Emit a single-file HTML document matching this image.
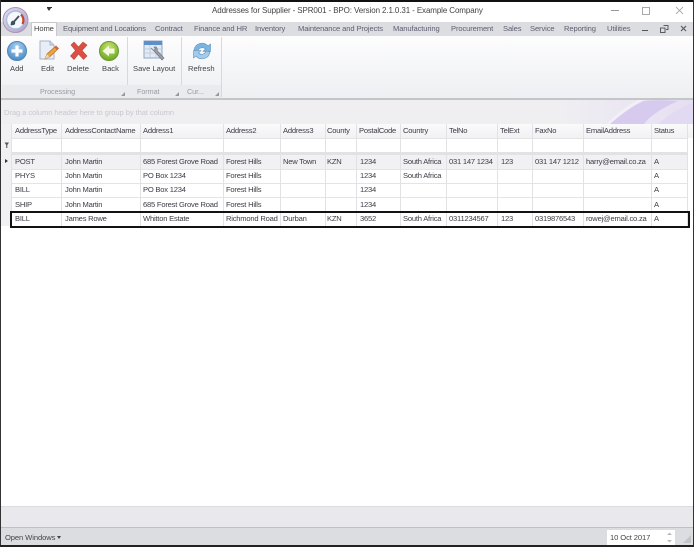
<!DOCTYPE html>
<html><head><meta charset="utf-8">
<style>
html,body{margin:0;padding:0;width:694px;height:547px;overflow:hidden;background:#fff}
#p{position:relative;width:694px;height:547px;overflow:hidden;font-family:"Liberation Sans",sans-serif;font-size:7.6px;letter-spacing:-.22px;color:#3c3c46;background:#fff;filter:blur(.3px)}
#p div{position:absolute}
.t{white-space:nowrap;line-height:12px;height:12px}
.tab{top:23px;color:#5d6070;white-space:nowrap;line-height:12px;font-size:7.6px;letter-spacing:-.12px}
.l{top:63px;white-space:nowrap;line-height:12px;color:#44444e;font-size:7.6px;letter-spacing:0}
.g{top:86px;white-space:nowrap;line-height:12px;color:#9a9aa2;font-size:7.2px;letter-spacing:-.05px}
.v{width:1px;top:124px;height:102px;background:#e2e2e5}
.h{left:11px;width:676px;height:1px;background:#e4e4e7}
</style></head><body><div id="p">
<!-- frame -->
<div style="left:0;top:0;width:694px;height:2px;background:#111"></div>
<div style="left:0;top:0;width:1px;height:547px;background:#333"></div>
<div style="left:693px;top:0;width:1px;height:547px;background:#333"></div>
<div style="left:0;top:545px;width:694px;height:2px;background:#222"></div>
<!-- title -->
<div class="t" style="left:212px;top:5px;font-size:8px;letter-spacing:-.11px;color:#444;width:300px">Addresses for Supplier - SPR001 - BPO: Version 2.1.0.31 - Example Company</div>
<div style="left:47px;top:8px;width:0;height:0;border-left:2.5px solid transparent;border-right:2.5px solid transparent;border-top:3.5px solid #333"></div>
<div style="left:47px;top:7px;width:5px;height:1px;background:#333"></div>
<div style="left:611px;top:10px;width:8px;height:1px;background:#999"></div>
<div style="left:642px;top:7px;width:6px;height:6px;border:1px solid #aaa"></div>
<svg style="position:absolute;left:675px;top:6px" width="9" height="9"><path d="M1 1L8 8M8 1L1 8" stroke="#999" stroke-width="0.8"/></svg>
<!-- tab strip -->
<div style="left:1px;top:22px;width:692px;height:14px;background:#dcdde1"></div>
<div style="left:31px;top:22px;width:26px;height:14px;background:#fdfdfe;border:1px solid #c8c8cc;border-bottom:none;box-sizing:border-box"></div>
<div class="tab" style="left:34px;color:#444">Home</div>
<div class="tab" style="left:63px">Equipment and Locations</div>
<div class="tab" style="left:155px">Contract</div>
<div class="tab" style="left:194px">Finance and HR</div>
<div class="tab" style="left:255px">Inventory</div>
<div class="tab" style="left:298px">Maintenance and Projects</div>
<div class="tab" style="left:393px">Manufacturing</div>
<div class="tab" style="left:451px">Procurement</div>
<div class="tab" style="left:503px">Sales</div>
<div class="tab" style="left:530px">Service</div>
<div class="tab" style="left:564px">Reporting</div>
<div class="tab" style="left:607px">Utilities</div>
<div style="left:642px;top:30px;width:6px;height:1px;background:#555"></div>
<svg style="position:absolute;left:660px;top:25px" width="9" height="9"><path d="M3.5 0.5H8V4.5H6M0.5 3H5V7.5H0.5Z" fill="none" stroke="#5a5a66"/></svg>
<svg style="position:absolute;left:680px;top:25px" width="8" height="8"><path d="M1 1L6 6M6 1L1 6" stroke="#5a5a66" stroke-width="1.2"/></svg>
<!-- ribbon -->
<div style="left:1px;top:36px;width:692px;height:62px;background:linear-gradient(#fdfdfe,#eeeff2)"></div>
<div style="left:1px;top:98px;width:692px;height:2px;background:#c4c5c9"></div>
<div style="left:127px;top:37px;width:1px;height:60px;background:#d8d9dd"></div>
<div style="left:181px;top:37px;width:1px;height:60px;background:#d8d9dd"></div>
<div style="left:221px;top:37px;width:1px;height:60px;background:#d8d9dd"></div>
<div style="left:2px;top:85px;width:219px;height:13px;background:#eaebee"></div>
<!-- ribbon icons -->
<svg style="position:absolute;left:6px;top:40px" width="22" height="22"><defs><radialGradient id="a" cx=".5" cy=".3" r=".8"><stop offset="0" stop-color="#a9d2f2"/><stop offset="1" stop-color="#3c7fc0"/></radialGradient><radialGradient id="b" cx=".5" cy=".3" r=".8"><stop offset="0" stop-color="#c6e36a"/><stop offset="1" stop-color="#5f9e1c"/></radialGradient></defs><circle cx="11" cy="11" r="9.5" fill="url(#a)" stroke="#4f86b8"/><path d="M11 5.5V16.5M5.5 11H16.5" stroke="#fff" stroke-width="3.2"/></svg>
<svg style="position:absolute;left:38px;top:39px" width="22" height="23"><path d="M2 2H12L16 6V20H2Z" fill="#e9eef6" stroke="#a8b4c6"/><path d="M12 2V6H16" fill="#cdd8e6" stroke="#a8b4c6"/><path d="M7 20L9 15L18 7L20.5 9.5L11.5 18Z" fill="#eda43c" stroke="#b06a20" stroke-width=".7"/><path d="M7 20L9 15L11.5 18Z" fill="#f3d6a8"/><path d="M18 7L20.5 9.5L19 11L16.5 8.5Z" fill="#d8604a"/></svg>
<svg style="position:absolute;left:68px;top:40px" width="21" height="21"><path d="M3 5L6 2L10.5 7L15 2L19 5L14 10.5L19 16L15.500 19.500L10.500 14L6 19.500L2.500 16L7.500 10.500Z" fill="#dd4f42" stroke="#c2493e" stroke-width=".6"/></svg>
<svg style="position:absolute;left:98px;top:40px" width="22" height="22"><circle cx="11" cy="11" r="9.500" fill="url(#b)" stroke="#6a9a2a"/><path d="M4.500 11L11 5.500V8.500H16.500V13.500H11V16.500Z" fill="#f4f8e0"/></svg>
<svg style="position:absolute;left:143px;top:40px" width="24" height="23"><rect x="1" y="1" width="18" height="17" fill="#e3eaf4" stroke="#8ea6c4"/><rect x="1" y="1" width="18" height="4" fill="#5f8fc8"/><path d="M1 9H19M1 13H19M7 5V18M13 5V18" stroke="#b7c6da" stroke-width=".8"/><path d="M8 8L12 12L19 20L21 18L14 10.500C15 8 13 6.500 11 7L12.500 9L10.500 10.500L8.500 8.500Z" fill="#9a9ea6" stroke="#6e727a" stroke-width=".6"/></svg>
<svg style="position:absolute;left:190px;top:40px" width="24" height="22"><path d="M4 10A8 8 0 0 1 18 6L20.500 4V11.500H13L15.500 9A4.500 4.500 0 0 0 8 11Z" fill="#7cb4e0" stroke="#5f92c0" stroke-width=".6"/><path d="M20 12A8 8 0 0 1 6 16L3.500 18V10.500H11L8.500 13A4.500 4.500 0 0 0 16 11Z" fill="#a4cbea" stroke="#5f92c0" stroke-width=".6"/></svg>
<div class="l" style="left:10px">Add</div>
<div class="l" style="left:41px">Edit</div>
<div class="l" style="left:67px">Delete</div>
<div class="l" style="left:102px">Back</div>
<div class="l" style="left:133px">Save Layout</div>
<div class="l" style="left:188px">Refresh</div>
<div class="g" style="left:40px">Processing</div>
<div class="g" style="left:137px">Format</div>
<div class="g" style="left:187px">Cur...</div>
<svg style="position:absolute;left:121px;top:92px" width="5" height="5"><path d="M4 0V4H0Z" fill="#999"/></svg>
<svg style="position:absolute;left:175px;top:92px" width="5" height="5"><path d="M4 0V4H0Z" fill="#999"/></svg>
<svg style="position:absolute;left:215px;top:92px" width="5" height="5"><path d="M4 0V4H0Z" fill="#999"/></svg>
<!-- group panel -->
<div style="left:1px;top:100px;width:692px;height:24px;background:#efeff2"></div>
<svg style="position:absolute;left:560px;top:100px" width="133" height="24"><defs><linearGradient id="c" x1="0" x2="1"><stop offset="0" stop-color="#efeff2"/><stop offset="1" stop-color="#e6def2"/></linearGradient></defs><rect width="133" height="24" fill="url(#c)"/><path d="M50 24C62 14 72 6 84 1C92 0 106 0 118 1C102 8 90 16 84 24Z" fill="#d6cbef"/><path d="M98 24C108 16 118 8 133 3V24Z" fill="#e2d9f2"/><path d="M47 24C58 12 70 4 78 0H84C72 6 60 14 50 24Z" fill="#f2eff7"/></svg>
<div class="t" style="left:4px;top:107px;color:#c8c8ce;font-size:7.6px;letter-spacing:-.08px">Drag a column header here to group by that column</div>
<!-- grid -->
<div style="left:1px;top:124px;width:692px;height:14px;background:linear-gradient(#fafafb,#f1f1f3)"></div>
<div style="left:1px;top:124px;width:10px;height:102px;background:#f1f1f3"></div>
<div style="left:11px;top:152px;width:676px;height:3px;background:#e2e2e5"></div>
<div style="left:11px;top:155px;width:676px;height:14px;background:#f1f1f3"></div>
<div class="h" style="top:138px"></div><div class="h" style="top:169px"></div><div class="h" style="top:183px"></div><div class="h" style="top:197px"></div>
<div class="v" style="left:11px"></div><div class="v" style="left:61px"></div><div class="v" style="left:140px"></div><div class="v" style="left:223px"></div><div class="v" style="left:280px"></div><div class="v" style="left:325px"></div><div class="v" style="left:356px"></div><div class="v" style="left:400px"></div><div class="v" style="left:446px"></div><div class="v" style="left:497px"></div><div class="v" style="left:532px"></div><div class="v" style="left:583px"></div><div class="v" style="left:651px"></div><div class="v" style="left:687px"></div>
<svg style="position:absolute;left:4px;top:142px" width="6" height="7"><path d="M0.500 0.500H5L3.300 3V6H2.200V3Z" fill="#555"/></svg>
<div style="left:5px;top:159px;width:0;height:0;border-top:2.500px solid transparent;border-bottom:2.500px solid transparent;border-left:3.500px solid #333"></div>
<div class="t" style="left:15px;top:125px">AddressType</div><div class="t" style="left:65px;top:125px">AddressContactName</div><div class="t" style="left:143px;top:125px">Address1</div><div class="t" style="left:226px;top:125px">Address2</div><div class="t" style="left:283px;top:125px">Address3</div><div class="t" style="left:327px;top:125px">County</div><div class="t" style="left:359px;top:125px">PostalCode</div><div class="t" style="left:403px;top:125px">Country</div><div class="t" style="left:449px;top:125px">TelNo</div><div class="t" style="left:500px;top:125px">TelExt</div><div class="t" style="left:535px;top:125px">FaxNo</div><div class="t" style="left:586px;top:125px">EmailAddress</div><div class="t" style="left:654px;top:125px">Status</div>
<div class="t" style="left:15px;top:156px">POST</div><div class="t" style="left:65px;top:156px">John Martin</div><div class="t" style="left:143px;top:156px">685 Forest Grove Road</div><div class="t" style="left:226px;top:156px">Forest Hills</div><div class="t" style="left:283px;top:156px">New Town</div><div class="t" style="left:327px;top:156px">KZN</div><div class="t" style="left:360px;top:156px">1234</div><div class="t" style="left:403px;top:156px">South Africa</div><div class="t" style="left:449px;top:156px">031 147 1234</div><div class="t" style="left:501px;top:156px">123</div><div class="t" style="left:535px;top:156px">031 147 1212</div><div class="t" style="left:586px;top:156px">harry@email.co.za</div><div class="t" style="left:654px;top:156px">A</div>
<div class="t" style="left:15px;top:170px">PHYS</div><div class="t" style="left:65px;top:170px">John Martin</div><div class="t" style="left:143px;top:170px">PO Box 1234</div><div class="t" style="left:226px;top:170px">Forest Hills</div><div class="t" style="left:360px;top:170px">1234</div><div class="t" style="left:403px;top:170px">South Africa</div><div class="t" style="left:654px;top:170px">A</div>
<div class="t" style="left:15px;top:184px">BILL</div><div class="t" style="left:65px;top:184px">John Martin</div><div class="t" style="left:143px;top:184px">PO Box 1234</div><div class="t" style="left:226px;top:184px">Forest Hills</div><div class="t" style="left:360px;top:184px">1234</div><div class="t" style="left:654px;top:184px">A</div>
<div class="t" style="left:15px;top:199px">SHIP</div><div class="t" style="left:65px;top:199px">John Martin</div><div class="t" style="left:143px;top:199px">685 Forest Grove Road</div><div class="t" style="left:226px;top:199px">Forest Hills</div><div class="t" style="left:360px;top:199px">1234</div><div class="t" style="left:654px;top:199px">A</div>
<div class="t" style="left:15px;top:213px">BILL</div><div class="t" style="left:65px;top:213px">James Rowe</div><div class="t" style="left:143px;top:213px">Whitton Estate</div><div class="t" style="left:226px;top:213px">Richmond Road</div><div class="t" style="left:283px;top:213px">Durban</div><div class="t" style="left:327px;top:213px">KZN</div><div class="t" style="left:360px;top:213px">3652</div><div class="t" style="left:403px;top:213px">South Africa</div><div class="t" style="left:449px;top:213px">0311234567</div><div class="t" style="left:501px;top:213px">123</div><div class="t" style="left:535px;top:213px">0319876543</div><div class="t" style="left:586px;top:213px">rowej@email.co.za</div><div class="t" style="left:654px;top:213px">A</div>
<div style="left:10px;top:211px;width:680px;height:17px;box-sizing:border-box;border:2px solid #111"></div>
<!-- logo -->
<svg style="position:absolute;left:2px;top:6px" width="27" height="28"><defs><linearGradient id="d" x1="0" y1="0" x2="1" y2="1"><stop offset="0" stop-color="#e8dff0"/><stop offset="1" stop-color="#b49ac8"/></linearGradient></defs><circle cx="13.500" cy="14" r="12.500" fill="url(#d)" stroke="#a896b4"/><circle cx="13.500" cy="14" r="9" fill="#f7f8fb" stroke="#9ec2e0" stroke-width="1.500"/><path d="M19 8.500A8 8 0 0 1 20.500 18" stroke="#d04030" stroke-width="2.200" fill="none"/><path d="M9 19L17 10" stroke="#40505f" stroke-width="1.800"/><circle cx="11" cy="17" r="2.200" fill="#40505f"/></svg>
<!-- bottom -->
<div style="left:1px;top:506px;width:692px;height:21px;background:#e9e9ed;border-top:1px solid #dcdce0;box-sizing:border-box"></div>
<div style="left:1px;top:527px;width:692px;height:1px;background:#bfc0c4"></div>
<div style="left:1px;top:528px;width:692px;height:17px;background:#dcdde0"></div>
<div class="t" style="left:5px;top:532px;color:#444;font-size:7.6px;letter-spacing:-.1px">Open Windows</div>
<div style="left:57px;top:536px;width:0;height:0;border-left:2.500px solid transparent;border-right:2.500px solid transparent;border-top:3px solid #444"></div>
<div style="left:607px;top:530px;width:68px;height:15px;background:#fff"></div>
<div class="t" style="left:610px;top:532px;color:#444;font-size:7.6px;letter-spacing:-.1px">10 Oct 2017</div>
<svg style="position:absolute;left:666px;top:531px" width="7" height="13"><path d="M1 4L3.500 1.500L6 4Z" fill="#bbb"/><path d="M1 9L3.500 11.500L6 9Z" fill="#bbb"/></svg>
<svg style="position:absolute;left:682px;top:534px" width="10" height="10"><path d="M9 1V9H1Z" fill="#c4c5c9"/></svg>
</div></body></html>
